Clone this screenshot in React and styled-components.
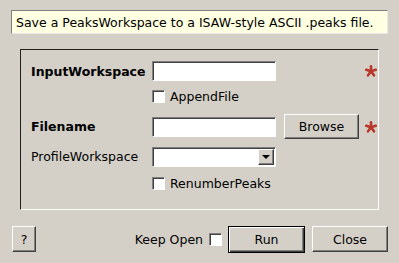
import React, { useState } from 'react'
import styled, { createGlobalStyle, css } from 'styled-components'

const GlobalStyle = createGlobalStyle`
  html, body {
    margin: 0;
    padding: 0;
    background: #d4d0c8;
  }
  body {
    font-family: 'DejaVu Sans', 'Liberation Sans', sans-serif;
    font-size: 12.5px;
    color: #000;
  }
`

const sunken = css`
  border-style: solid;
  border-width: 1px;
  border-color: #808080 #fff #fff #808080;
  box-shadow: inset 1px 1px 0 #404040;
`

const raised = css`
  border-style: solid;
  border-width: 1px;
  border-color: #fff #404040 #404040 #fff;
  box-shadow: inset -1px -1px 0 #808080;
`

const Dialog = styled.div`
  width: 399px;
  height: 263px;
  box-sizing: border-box;
  padding-top: 10px;
  display: flex;
  flex-direction: column;
`

const Description = styled.div`
  margin: 0 11px;
  height: 24px;
  box-sizing: border-box;
  background: #ffffe1;
  border: 1px solid;
  border-color: #808080 #e8e8e8 #e8e8e8 #808080;
  padding-left: 4px;
  display: flex;
  align-items: center;
  white-space: nowrap;
`

const GroupBox = styled.div`
  margin: 15px 20px 0 20px;
  height: 161px;
  box-sizing: border-box;
  border-style: solid;
  border-width: 1px;
  border-color: #202020 #fff #fff #202020;
  padding: 11px 0 0 10px;
  display: grid;
  grid-template-columns: 121px 124px 8px 75px 7px 12px;
  grid-template-rows: 20px 31px 29px 31px 22px;
  align-items: center;
`

const Label = styled.div`
  grid-column: 1;
  font-weight: ${p => (p.$bold ? 'bold' : 'normal')};
  white-space: nowrap;
`

const Field = styled.div`
  grid-column: 2;
  height: 20px;
  box-sizing: border-box;
  background: #fff;
  ${sunken};
`

const Combo = styled(Field)`
  display: flex;
  justify-content: flex-end;
  align-items: center;
  padding-right: 1px;
`

const ComboButton = styled.div`
  width: 16px;
  height: 16px;
  box-sizing: border-box;
  background: #d4d0c8;
  ${raised};
  display: flex;
  align-items: center;
  justify-content: center;
`

const Arrow = styled.div`
  width: 0;
  height: 0;
  border-left: 4px solid transparent;
  border-right: 4px solid transparent;
  border-top: 4px solid #000;
  margin-top: 1px;
`

const CheckRow = styled.div`
  grid-column: 2 / span 5;
  display: flex;
  align-items: center;
  gap: 5px;
`

const Box = styled.div`
  width: 13px;
  height: 13px;
  box-sizing: border-box;
  background: #fff;
  ${sunken};
  flex: none;
`

const Button = styled.button`
  font: inherit;
  color: #000;
  background: #d4d0c8;
  box-sizing: border-box;
  width: ${p => p.$w}px;
  height: ${p => p.$h || 26}px;
  padding: 0;
  ${raised};
  ${p =>
    p.$default &&
    css`
      border-color: #000;
      box-shadow: inset 1px 1px 0 #fff, inset -1px -1px 0 #404040, inset -2px -2px 0 #808080;
    `}
`

const BrowseButton = styled(Button)`
  grid-column: 4;
  justify-self: start;
  height: 25px;
`

const Required = styled.svg`
  grid-column: 6;
  width: 12px;
  height: 12px;
  margin-left: -1px;
`

const BottomBar = styled.div`
  margin-top: 16px;
  padding: 0 11px 0 12px;
  display: flex;
  align-items: center;
  height: 26px;
`

const KeepOpen = styled.label`
  margin-left: auto;
  display: flex;
  align-items: center;
  gap: 6px;
  margin-right: 6px;
`

const Buttons = styled.div`
  display: flex;
  gap: 7px;
  align-items: center;
`

const Star = () => (
  <Required viewBox="0 0 12 12">
    {[-90, -18, 54, 126, 198].map(a => {
      const r = (a * Math.PI) / 180
      return (
        <line
          key={a}
          x1="6"
          y1="6.3"
          x2={6 + Math.cos(r) * 5}
          y2={6.3 + Math.sin(r) * 5}
          stroke="#b8372b"
          strokeWidth="2.6"
          strokeLinecap="round"
        />
      )
    })}
  </Required>
)

const App = () => {
  const [append] = useState(false)
  return (
    <>
      <GlobalStyle />
      <Dialog>
        <Description>Save a PeaksWorkspace to a ISAW-style ASCII .peaks file.</Description>
        <GroupBox>
          <Label $bold>InputWorkspace</Label>
          <Field />
          <Star />

          <CheckRow>
            <Box data-checked={append} />
            AppendFile
          </CheckRow>

          <Label $bold>Filename</Label>
          <Field />
          <BrowseButton $w={75}>Browse</BrowseButton>
          <Star />

          <Label>ProfileWorkspace</Label>
          <Combo>
            <ComboButton>
              <Arrow />
            </ComboButton>
          </Combo>

          <CheckRow>
            <Box />
            RenumberPeaks
          </CheckRow>
        </GroupBox>
        <BottomBar>
          <Button $w={24}>?</Button>
          <KeepOpen>
            Keep Open
            <Box />
          </KeepOpen>
          <Buttons>
            <Button $w={77} $h={27} $default>
              Run
            </Button>
            <Button $w={76}>Close</Button>
          </Buttons>
        </BottomBar>
      </Dialog>
    </>
  )
}

export default App
